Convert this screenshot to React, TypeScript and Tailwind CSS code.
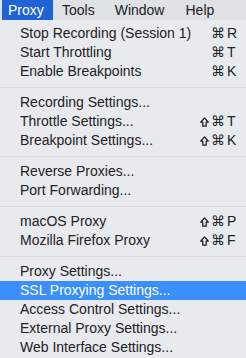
import React from 'react'

type Item = { label: string; shift?: boolean; key?: string; active?: boolean } | 'sep'

const items: Item[] = [
  { label: 'Stop Recording (Session 1)', key: 'R' },
  { label: 'Start Throttling', key: 'T' },
  { label: 'Enable Breakpoints', key: 'K' },
  'sep',
  { label: 'Recording Settings...' },
  { label: 'Throttle Settings...', shift: true, key: 'T' },
  { label: 'Breakpoint Settings...', shift: true, key: 'K' },
  'sep',
  { label: 'Reverse Proxies...' },
  { label: 'Port Forwarding...' },
  'sep',
  { label: 'macOS Proxy', shift: true, key: 'P' },
  { label: 'Mozilla Firefox Proxy', shift: true, key: 'F' },
  'sep',
  { label: 'Proxy Settings...' },
  { label: 'SSL Proxying Settings...', active: true },
  { label: 'Access Control Settings...' },
  { label: 'External Proxy Settings...' },
  { label: 'Web Interface Settings...' },
]

function ShiftIcon() {
  return (
    <svg width="9" height="10" viewBox="0 0 9 10" className="mr-[2px]">
      <path d="M4.5 0.9 L8.3 5.2 H6.2 V9.2 H2.8 V5.2 H0.7 Z" fill="none" stroke="#222" strokeWidth="1.3" strokeLinejoin="round" />
    </svg>
  )
}

export default function App() {
  return (
    <div className="w-[246px] h-[358px] overflow-hidden bg-[#e8eaee] text-[#222] text-[14px] font-['Liberation_Sans',Arial,sans-serif]">
      <div className="flex h-5 bg-[#dfe1e5] leading-5">
        <span className="ml-[2px] w-[51px] pl-[6px] bg-[#1f64d4] text-white">Proxy</span>
        <span className="ml-[9px]">Tools</span>
        <span className="ml-[20px]">Window</span>
        <span className="ml-[21px]">Help</span>
      </div>
      <div className="pt-1">
        {items.map((it, i) =>
          it === 'sep' ? (
            <div key={i} className="h-3 flex items-center">
              <div className="h-px w-full bg-[#d6d8dd]" />
            </div>
          ) : (
            <div
              key={i}
              className={`h-[19px] flex items-center pl-5 pr-[9px] ${it.active ? 'bg-[#3a8ffb] text-white' : ''}`}
            >
              <span className="flex-1">{it.label}</span>
              {it.key && (
                <span className="flex items-center">
                  {it.shift && <ShiftIcon />}
                  <span className="font-['DejaVu_Sans',sans-serif] text-[14px] mr-[2px]">⌘</span>
                  <span className="w-[10px]">{it.key}</span>
                </span>
              )}
            </div>
          )
        )}
      </div>
    </div>
  )
}
